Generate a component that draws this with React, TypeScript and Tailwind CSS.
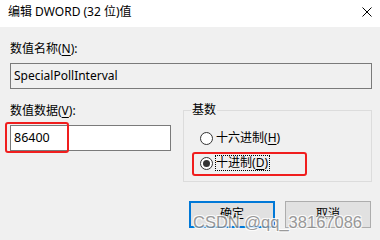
import React from "react";

const font = {
  fontFamily: '"Noto Sans", "Noto Sans CJK SC", sans-serif',
};

function Radio({ checked, label, hotkey, focused }: { checked?: boolean; label: string; hotkey: string; focused?: boolean }) {
  return (
    <div className="flex h-[16px] items-center gap-[2px]">
      <span className="flex h-[13px] w-[13px] items-center justify-center rounded-full border border-[#333333] bg-white">
        {checked && <span className="h-[7px] w-[7px] rounded-full bg-[#333333]" />}
      </span>
      <span
        className={
          focused
            ? "border border-dotted border-black pr-[1px] leading-[14px]"
            : "border border-transparent pr-[1px] leading-[14px]"
        }
      >
        {label}(<span className="underline underline-offset-2">{hotkey}</span>)
      </span>
    </div>
  );
}

export default function App() {
  return (
    <div className="relative h-[240px] w-[380px] overflow-hidden bg-[#f0f0f0] text-[12px] text-black" style={font}>
      {/* title bar */}
      <div className="flex h-[27px] items-start justify-between bg-white pl-[8px] pr-[8px]">
        <span className="pt-[4px] leading-[16px]">编辑 DWORD (32 位)值</span>
        <svg width="10" height="10" viewBox="0 0 10 10" className="mt-[7px]">
          <path d="M0.5 0.5 L9.5 9.5 M9.5 0.5 L0.5 9.5" stroke="#000" strokeWidth="1" />
        </svg>
      </div>

      <div className="pl-[10px] pr-[8px] pt-[14px]">
        <div className="leading-[16px]">
          数值名称(<span className="underline underline-offset-2">N</span>):
        </div>
        <div className="mt-[6px] flex h-[26px] items-center border border-[#7a7a7a] bg-[#f0f0f0] px-[3px]">
          SpecialPollInterval
        </div>

        <div className="mt-[13px] flex gap-[12px]">
          <div className="w-[161px] pt-[1px]">
            <div className="leading-[16px]">
              数值数据(<span className="underline underline-offset-2">V</span>):
            </div>
            <div className="mt-[6px] flex h-[26px] items-center border border-[#7a7a7a] bg-white px-[3px] text-[12.5px]">
              86400
            </div>
          </div>

          <fieldset className="h-[80px] flex-1 border border-[#dcdcdc]">
            <legend className="ml-[7px] px-[1px] leading-[16px]">基数</legend>
            <div className="flex flex-col gap-[9px] pl-[16px] pt-[12px]">
              <Radio label="十六进制" hotkey="H" />
              <Radio label="十进制" hotkey="D" checked focused />
            </div>
          </fieldset>
        </div>

        <div className="mt-[19px] flex justify-end gap-[10px] pr-[1px]">
          <button className="flex h-[27px] w-[86px] items-start justify-center border-2 border-[#0078d7] bg-[#e1e1e1] pt-[3px] leading-[16px]">
            确定
          </button>
          <button className="flex h-[27px] w-[86px] items-start justify-center border border-[#adadad] bg-[#e1e1e1] pt-[4px] leading-[16px]">
            取消
          </button>
        </div>
      </div>

      {/* annotation boxes */}
      <div className="absolute left-[5px] top-[122px] h-[31px] w-[64px] rounded-[3px] border-2 border-[#f01e1e]" />
      <div className="absolute left-[192px] top-[152px] h-[24px] w-[115px] rounded-[3px] border-2 border-[#f01e1e]" />

      {/* watermark */}
      <div
        className="absolute left-[193px] top-[212px] text-[16.5px] leading-[20px] text-[#8c8c8c] opacity-85 [text-shadow:1px_1px_0_#fff,-1px_-1px_0_#fff,1px_-1px_0_#fff,-1px_1px_0_#fff]"
        style={{ fontFamily: '"Liberation Sans", Arial, sans-serif' }}
      >
        CSDN @qq_38167086
      </div>
    </div>
  );
}
